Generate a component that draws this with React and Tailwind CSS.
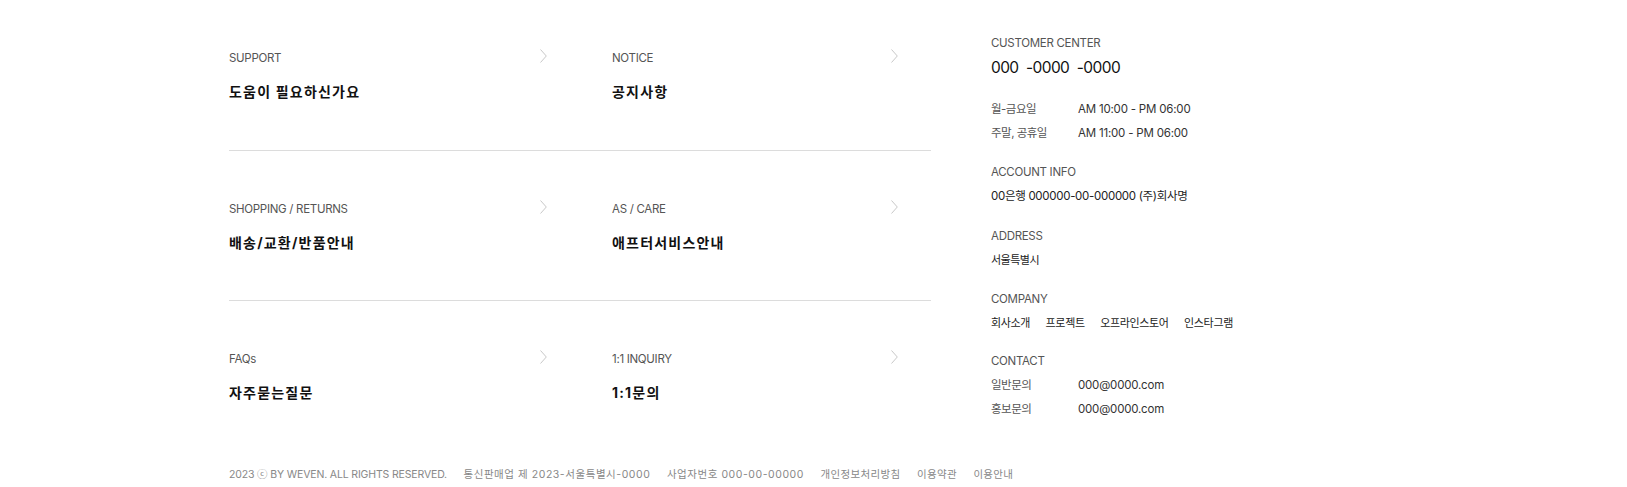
import React from 'react';

const latin = { fontFamily: 'Inter, "Noto Sans CJK KR", sans-serif' };

const items = [
  [
    { label: 'SUPPORT', title: '도움이 필요하신가요' },
    { label: 'NOTICE', title: '공지사항' },
  ],
  [
    { label: 'SHOPPING / RETURNS', title: '배송/교환/반품안내' },
    { label: 'AS / CARE', title: '애프터서비스안내' },
  ],
  [
    { label: 'FAQs', title: '자주묻는질문' },
    { label: '1:1 INQUIRY', title: '1:1문의' },
  ],
];

function Chevron() {
  return (
    <svg width="7" height="14" viewBox="0 0 7 14" fill="none" className="mt-[-2px]">
      <path d="M0.5 0.5L6.3 7L0.5 13.5" stroke="#c8c8c8" strokeWidth="1" />
    </svg>
  );
}

function Cell({ label, title, className }) {
  return (
    <div className={className}>
      <div className="flex items-start justify-between">
        <span className="text-[11.5px] text-[#555] leading-[14px] tracking-[-0.3px]">{label}</span>
        <Chevron />
      </div>
      <div className="mt-[17px] text-[14px] font-bold text-[#111] leading-[20px] tracking-[1.2px]">{title}</div>
    </div>
  );
}

function Label({ children }) {
  return <div className="text-[11.5px] text-[#555] leading-[24px] tracking-[-0.3px]">{children}</div>;
}

function Row({ k, v }) {
  return (
    <div className="flex text-[11.5px] leading-[24px] tracking-[-0.2px]">
      <span className="w-[87px] text-[#555] tracking-[-0.5px]">{k}</span>
      <span className="text-[#333]">{v}</span>
    </div>
  );
}

export default function App() {
  return (
    <div className="w-[1627px] h-[487px] bg-white overflow-hidden" style={latin}>
      <div className="flex pl-[229px]">
        {/* Left menu grid */}
        <div className="w-[702px]">
          {items.map((row, i) => (
            <div
              key={i}
              className={`grid grid-cols-2 pt-[51px] h-[150.5px] ${i < 2 ? 'border-b border-[#dcdcdc]' : ''}`}
            >
              <Cell {...row[0]} className="pr-[33px]" />
              <Cell {...row[1]} className="pl-[32px] pr-[33px]" />
            </div>
          ))}
        </div>

        {/* Right info column */}
        <div className="ml-[60px] pt-[31px] flex flex-col">
          <Label>CUSTOMER CENTER</Label>
          <div className="text-[15.5px] text-[#111] leading-[26px] tracking-[-0.6px] whitespace-pre">
            {'000  -0000  -0000'}
          </div>
          <div className="mt-[15.5px] flex flex-col gap-[15.5px]">
            <div>
              <Row k="월-금요일" v="AM 10:00 - PM 06:00" />
              <Row k="주말, 공휴일" v="AM 11:00 - PM 06:00" />
            </div>
            <div>
              <Label>ACCOUNT INFO</Label>
              <div className="text-[11.5px] text-[#222] leading-[24px] tracking-[-0.3px]">
                00은행 000000-00-000000 (주)회사명
              </div>
            </div>
            <div>
              <Label>ADDRESS</Label>
              <div className="text-[11px] text-[#222] leading-[24px] tracking-[-0.5px]">서울특별시</div>
            </div>
            <div>
              <Label>COMPANY</Label>
              <div className="flex gap-[15.5px] text-[11px] text-[#222] leading-[24px] tracking-[-0.35px]">
                <span>회사소개</span>
                <span>프로젝트</span>
                <span>오프라인스토어</span>
                <span>인스타그램</span>
              </div>
            </div>
            <div className="-mt-[2px]">
              <Label>CONTACT</Label>
              <Row k="일반문의" v="000@0000.com" />
              <Row k="홍보문의" v="000@0000.com" />
            </div>
          </div>
        </div>
      </div>

      {/* Bottom bar */}
      <div className="pl-[229px] mt-[16px] flex gap-[16.5px] text-[10.5px] text-[#888] leading-[14px]">
        <span className="tracking-[-0.15px]">2023 ⓒ BY WEVEN. ALL RIGHTS RESERVED.</span>
        <span className="tracking-[0.55px]">통신판매업 제 2023-서울특별시-0000</span>
        <span className="tracking-[0.55px]">사업자번호 000-00-00000</span>
        <span className="tracking-[0.35px]">개인정보처리방침</span>
        <span className="tracking-[0.3px]">이용약관</span>
        <span className="tracking-[0.3px]">이용안내</span>
      </div>
    </div>
  );
}
